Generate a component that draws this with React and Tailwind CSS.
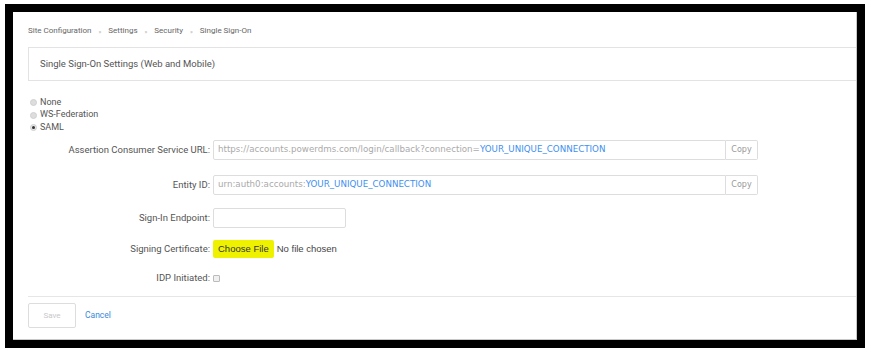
export default function App() {
    const label = "w-[185px] shrink-0 text-right text-[9.5px] text-[#555] pr-[3px]";
    const mono = "font-['DejaVu_Sans',sans-serif]";

    return (
        <div className="w-[871px] h-[352px] bg-white pt-[4px] pl-[5px] font-['Roboto',sans-serif] overflow-hidden">
            <div className="w-[860px] h-[344px] border-[8px] border-black bg-white">
                <div className="h-full w-full border-r border-b border-[#c8c8c8] pl-[15px] flex flex-col">
                    <div className="h-[35px] pt-[3px] flex items-center gap-[7px] text-[8px] text-[#666]">
                        <span>Site Configuration</span>
                        <span className="text-[6px] text-[#aaa]">»</span>
                        <span>Settings</span>
                        <span className="text-[6px] text-[#aaa]">»</span>
                        <span>Security</span>
                        <span className="text-[6px] text-[#aaa]">»</span>
                        <span>Single Sign-On</span>
                    </div>
                    <div className="h-[34px] border border-r-0 border-[#e3e3e3] flex items-center pl-[11px] text-[9.5px] text-[#555]">
                        Single Sign-On Settings (Web and Mobile)
                    </div>

                    <div className="mt-[17px] flex flex-col gap-[3.5px] text-[9px] text-[#555]">
                        <div className="flex items-center gap-[3px] h-[9px]">
                            <span className="w-[7px] h-[7px] rounded-full bg-[#ddd] border border-[#d0d0d0] ml-[2px]"></span>
                            <span>None</span>
                        </div>
                        <div className="flex items-center gap-[3px] h-[9px]">
                            <span className="w-[7px] h-[7px] rounded-full bg-[#ddd] border border-[#d0d0d0] ml-[2px]"></span>
                            <span>WS-Federation</span>
                        </div>
                        <div className="flex items-center gap-[3px] h-[9px]">
                            <span className="w-[7px] h-[7px] rounded-full bg-[#e6e6e6] border border-[#d0d0d0] ml-[2px] flex items-center justify-center">
                                <span className="w-[3px] h-[3px] rounded-full bg-[#333]"></span>
                            </span>
                            <span>SAML</span>
                        </div>
                    </div>

                    <div className="mt-[8px] flex items-center h-[20px]">
                        <div className={label}>Assertion Consumer Service URL:</div>
                        <div className={`w-[513px] h-[20px] border border-[#ddd] rounded-l-[2px] flex items-center pl-[4px] text-[8.7px] ${mono} text-[#aaa] whitespace-nowrap overflow-hidden`}>
                            https://accounts.powerdms.com/login/callback?connection=<span className="text-[#3d8ff0]">YOUR_UNIQUE_CONNECTION</span>
                        </div>
                        <div className={`w-[32px] h-[20px] border border-l-0 border-[#ddd] rounded-r-[2px] flex items-center justify-center text-[8px] ${mono} text-[#999]`}>Copy</div>
                    </div>

                    <div className="mt-[15px] flex items-center h-[20px]">
                        <div className={label}>Entity ID:</div>
                        <div className={`w-[513px] h-[20px] border border-[#ddd] rounded-l-[2px] flex items-center pl-[4px] text-[8.7px] ${mono} text-[#aaa] whitespace-nowrap overflow-hidden`}>
                            urn:auth0:accounts:<span className="text-[#3d8ff0]">YOUR_UNIQUE_CONNECTION</span>
                        </div>
                        <div className={`w-[32px] h-[20px] border border-l-0 border-[#ddd] rounded-r-[2px] flex items-center justify-center text-[8px] ${mono} text-[#999]`}>Copy</div>
                    </div>

                    <div className="mt-[13px] flex items-center h-[20px]">
                        <div className={label}>Sign-In Endpoint:</div>
                        <div className="w-[133px] h-[20px] border border-[#ddd] rounded-[2px]"></div>
                    </div>

                    <div className="mt-[11px] flex items-center h-[20px]">
                        <div className={label}>Signing Certificate:</div>
                        <div className="h-[18px] px-[5px] bg-[#eef200] rounded-[2px] flex items-center text-[9.5px] text-[#333] font-['Liberation_Sans',sans-serif]">Choose File</div>
                        <span className="ml-[3px] text-[9.5px] text-[#444] font-['Liberation_Sans',sans-serif]">No file chosen</span>
                    </div>

                    <div className="mt-[9px] flex items-center h-[20px]">
                        <div className={label}>IDP Initiated:</div>
                        <span className="w-[7px] h-[7px] border border-[#bbb] bg-[#f0f0f0] rounded-[1px]"></span>
                    </div>

                    <div className="mt-[8px] border-t border-[#e6e6e6]"></div>

                    <div className="mt-[6px] flex items-center">
                        <div className="w-[48px] h-[25px] border border-[#ddd] rounded-[2px] flex items-center justify-center text-[8px] text-[#c8c8c8]">Save</div>
                        <span className="ml-[9px] text-[8.5px] text-[#3a8ad8]">Cancel</span>
                    </div>
                </div>
            </div>
        </div>
    );
}
